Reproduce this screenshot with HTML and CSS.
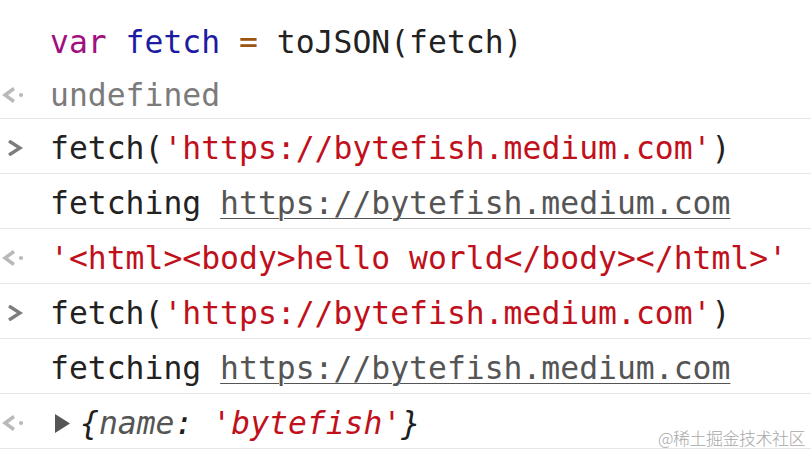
FILE: index.html
```html
<!DOCTYPE html>
<html>
<head>
<meta charset="utf-8">
<link rel="stylesheet" href="styles.css">
</head>
<body>
<div class="console">
  <div class="row plain first">
    <span class="gutter"></span>
    <span class="code"><span class="kw">var</span> <span class="var">fetch</span> <span class="op">=</span> toJSON(fetch)</span>
  </div>
  <div class="row plain second">
    <span class="gutter"><svg class="ret" width="24" height="16" viewBox="0 0 24 16"><path d="M13 1.5 L4 8 L13 14.5" fill="none" stroke="#b9b9b9" stroke-width="3.4"/><circle cx="20" cy="8" r="2.1" fill="#b9b9b9"/></svg></span>
    <span class="code muted">undefined</span>
  </div>
  <div class="row">
    <span class="gutter"><svg class="prompt" width="16" height="16" viewBox="0 0 16 16"><path d="M2 1 L13 8 L2 15" fill="none" stroke="#7d7d7d" stroke-width="3.4"/></svg></span>
    <span class="code">fetch(<span class="str">'https://bytefish.medium.com'</span>)</span>
  </div>
  <div class="row">
    <span class="gutter"></span>
    <span class="code">fetching <span class="link">https://bytefish.medium.com</span></span>
  </div>
  <div class="row">
    <span class="gutter"><svg class="ret" width="24" height="16" viewBox="0 0 24 16"><path d="M13 1.5 L4 8 L13 14.5" fill="none" stroke="#b9b9b9" stroke-width="3.4"/><circle cx="20" cy="8" r="2.1" fill="#b9b9b9"/></svg></span>
    <span class="code str">'&lt;html&gt;&lt;body&gt;hello world&lt;/body&gt;&lt;/html&gt;'</span>
  </div>
  <div class="row">
    <span class="gutter"><svg class="prompt" width="16" height="16" viewBox="0 0 16 16"><path d="M2 1 L13 8 L2 15" fill="none" stroke="#7d7d7d" stroke-width="3.4"/></svg></span>
    <span class="code">fetch(<span class="str">'https://bytefish.medium.com'</span>)</span>
  </div>
  <div class="row">
    <span class="gutter"></span>
    <span class="code">fetching <span class="link">https://bytefish.medium.com</span></span>
  </div>
  <div class="row">
    <span class="gutter"><svg class="ret" width="24" height="16" viewBox="0 0 24 16"><path d="M13 1.5 L4 8 L13 14.5" fill="none" stroke="#b9b9b9" stroke-width="3.4"/><circle cx="20" cy="8" r="2.1" fill="#b9b9b9"/></svg></span>
    <span class="tri"><svg width="15" height="19" viewBox="0 0 15 19"><path d="M0 0 L15 9.5 L0 19 Z" fill="#555"/></svg></span>
    <span class="code obj">{<span class="key">name</span>: <span class="str">'bytefish'</span>}</span>
  </div>
  <div class="row end"></div>
</div>
<div class="watermark">@稀土掘金技术社区</div>
</body>
</html>
```
FILE: styles.css
```css
html, body {
  margin: 0;
  padding: 0;
  background: #ffffff;
  overflow: hidden;
}
body {
  width: 811px;
  height: 458px;
  position: relative;
}
.console {
  padding-top: 12px;
  display: flex;
  flex-direction: column;
}
.row {
  box-sizing: border-box;
  display: flex;
  align-items: center;
  height: 55px;
  padding-top: 4px;
  border-top: 1px solid #e7e7e7;
}
.row.plain {
  border-top-color: transparent;
}
.row.first {
  height: 54px;
}
.row.second {
  height: 52px;
}
.row.end {
  height: 8px;
  padding-top: 0;
}
.gutter {
  width: 50px;
  height: 20px;
  flex: none;
  display: flex;
  align-items: center;
}
.prompt {
  margin-left: 7px;
}
.ret {
  margin-left: 1px;
}
.tri {
  display: flex;
  align-items: center;
  margin-left: 5px;
  width: 25px;
}
.code {
  font-family: "DejaVu Sans Mono", monospace;
  font-size: 31.4px;
  line-height: 36px;
  color: #222222;
  white-space: pre;
}
.kw { color: #a1107f; }
.var { color: #1d1ba4; }
.op { color: #9a5415; }
.str { color: #c0101c; }
.muted { color: #7b7b7b; }
.link {
  color: #555555;
  text-decoration: underline;
  text-decoration-thickness: 1px;
  text-underline-offset: 4px;
}
.obj { font-style: italic; color: #1e1e1e; }
.key { color: #555555; }
.watermark {
  position: absolute;
  right: 6px;
  bottom: 8px;
  font-family: "Noto Sans CJK SC", sans-serif;
  font-size: 17px;
  font-weight: 300;
  color: #a8a8a8;
  letter-spacing: -0.5px;
}
```
